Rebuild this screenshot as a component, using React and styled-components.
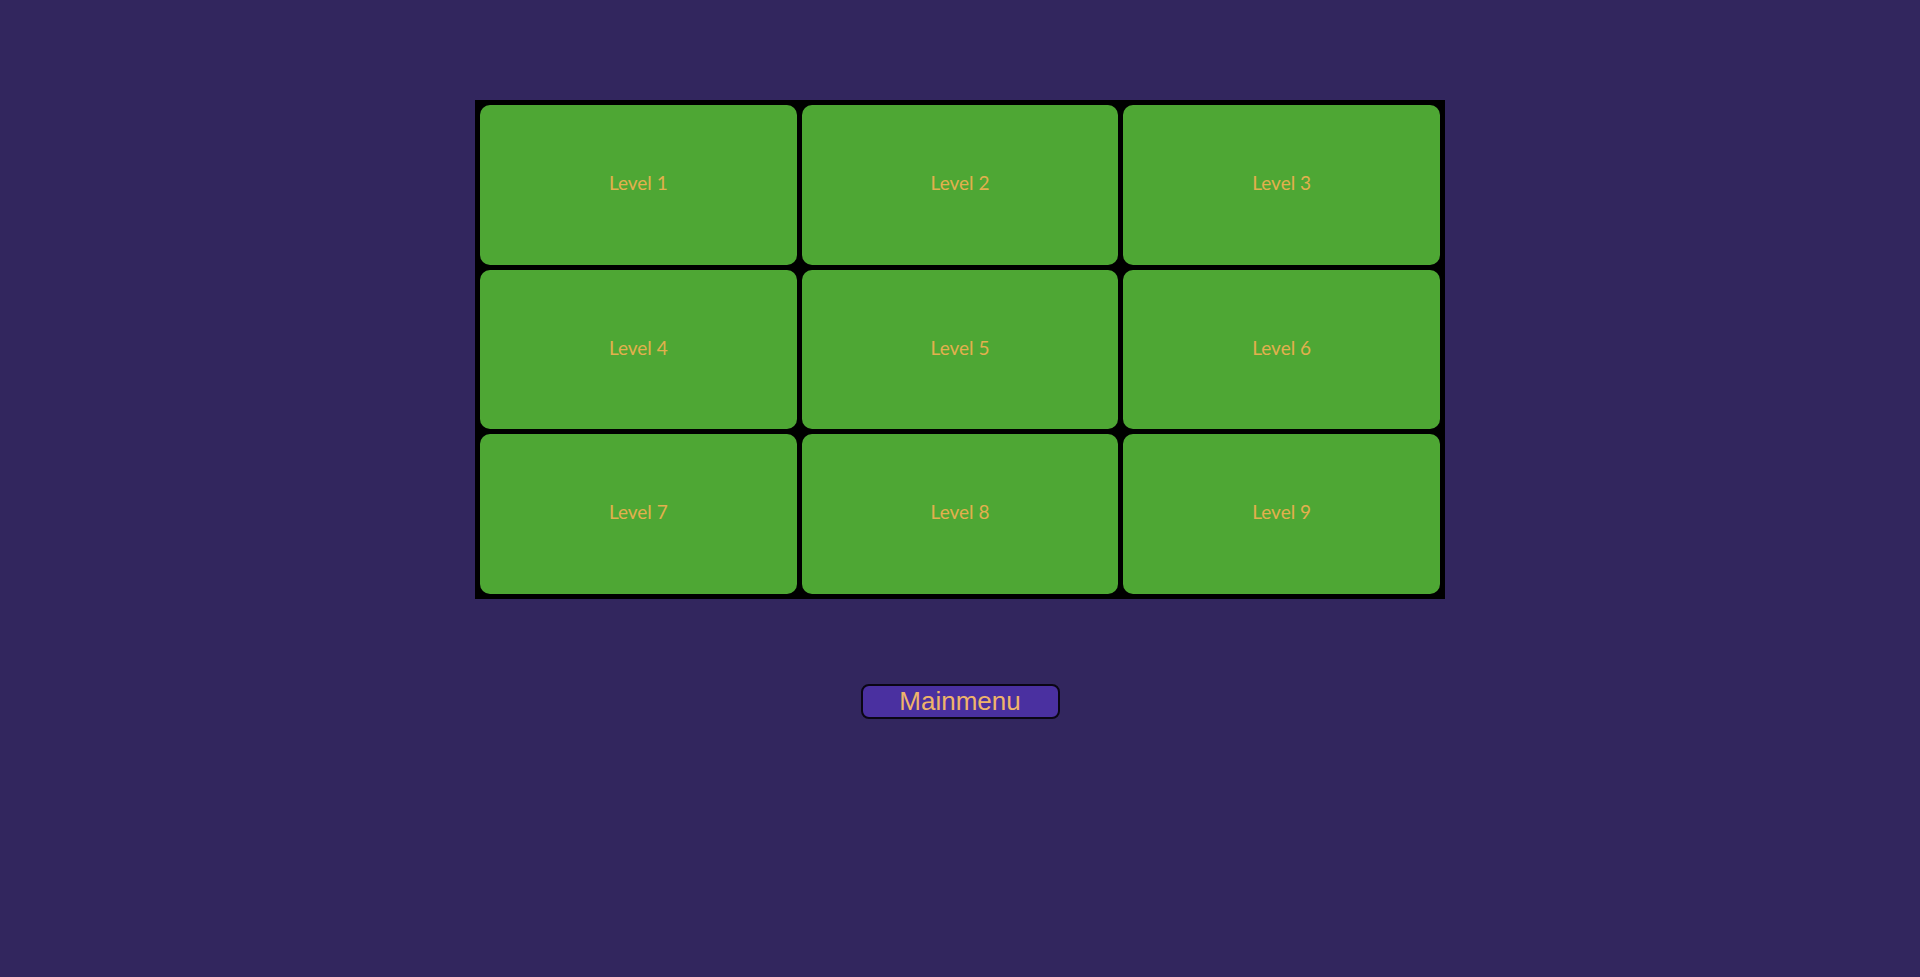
import React from "react";
import styled, { createGlobalStyle } from "styled-components";

const Global = createGlobalStyle`
  html, body {
    margin: 0;
    padding: 0;
    background: #32265e;
    min-height: 100%;
  }
  body {
    font-family: "Liberation Sans", Arial, sans-serif;
  }
`;

const Page = styled.div`
  min-height: 977px;
  display: flex;
  flex-direction: column;
  align-items: center;
  padding-top: 100px;
  box-sizing: border-box;
`;

const Grid = styled.div`
  width: 50vw;
  height: 50vh;
  padding: 5px;
  background: #000;
  display: grid;
  grid-template-columns: repeat(3, 1fr);
  grid-template-rows: repeat(3, 1fr);
  gap: 5px;
`;

const LevelCell = styled.button`
  border: none;
  margin: 0;
  padding: 0 0 4px 0;
  background: #4ea734;
  border-radius: 10px;
  display: flex;
  align-items: center;
  justify-content: center;
  color: #e2b04e;
  font-family: Lato, "Open Sans", sans-serif;
  font-size: 19px;
  cursor: pointer;
`;

const MenuButton = styled.button`
  margin-top: 85px;
  width: 199px;
  height: 35px;
  box-sizing: border-box;
  background: #4a30a0;
  border: 2px solid #0a0614;
  border-radius: 8px;
  color: #efb46a;
  font-family: "Liberation Sans", Arial, sans-serif;
  font-size: 26px;
  line-height: 1;
  padding: 0;
  display: flex;
  align-items: center;
  justify-content: center;
  cursor: pointer;
`;

export default function App() {
  const levels = Array.from({ length: 9 }, (_, i) => i + 1);
  return (
    <>
      <Global />
      <Page>
        <Grid>
          {levels.map((n) => (
            <LevelCell key={n}>Level {n}</LevelCell>
          ))}
        </Grid>
        <MenuButton>Mainmenu</MenuButton>
      </Page>
    </>
  );
}
